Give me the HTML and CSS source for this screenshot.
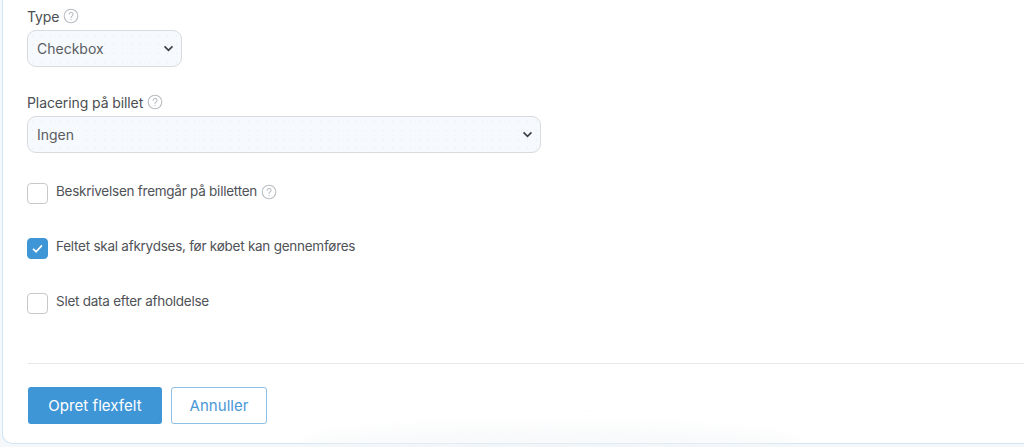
FILE: index.html
```html
<!DOCTYPE html>
<html lang="da">
<head>
<meta charset="utf-8">
<title>Opret flexfelt</title>
<link rel="stylesheet" href="styles.css">
</head>
<body>
<form class="card">
  <div class="field field-type">
    <div class="label">Type
      <svg class="help" viewBox="0 0 16 16"><circle cx="8" cy="8" r="6.8"/><path d="M6.2 6.3a1.9 1.9 0 1 1 2.9 1.6c-.7.4-1.1.8-1.1 1.6"/><path d="M8 11.3v.4"/></svg>
    </div>
    <select class="select select-small"><option>Checkbox</option></select>
  </div>
  <div class="field field-place">
    <div class="label">Placering på billet
      <svg class="help" viewBox="0 0 16 16"><circle cx="8" cy="8" r="6.8"/><path d="M6.2 6.3a1.9 1.9 0 1 1 2.9 1.6c-.7.4-1.1.8-1.1 1.6"/><path d="M8 11.3v.4"/></svg>
    </div>
    <select class="select select-wide"><option>Ingen</option></select>
  </div>
  <div class="check-row">
    <span class="box"></span>
    <span class="check-text">Beskrivelsen fremgår på billetten</span>
    <svg class="help help-row" viewBox="0 0 16 16"><circle cx="8" cy="8" r="6.8"/><path d="M6.2 6.3a1.9 1.9 0 1 1 2.9 1.6c-.7.4-1.1.8-1.1 1.6"/><path d="M8 11.3v.4"/></svg>
  </div>
  <div class="check-row">
    <span class="box box-on"><svg viewBox="0 0 20 20"><path d="M5.3 10.4l3.2 3 6.2-6.6"/></svg></span>
    <span class="check-text">Feltet skal afkrydses, før købet kan gennemføres</span>
  </div>
  <div class="check-row">
    <span class="box"></span>
    <span class="check-text">Slet data efter afholdelse</span>
  </div>
  <div class="divider"></div>
  <div class="actions">
    <button type="button" class="btn btn-primary">Opret flexfelt</button>
    <button type="button" class="btn btn-outline">Annuller</button>
  </div>
</form>
<div class="glow"></div>
</body>
</html>
```
FILE: styles.css
```css
* { box-sizing: border-box; }
html, body { margin: 0; height: 447px; overflow: hidden; }
body {
  position: relative;
  background: #f5f8fb;
  font-family: "Inter", "Liberation Sans", sans-serif;
  color: #4a4d52;
  font-size: 13px;
}
.card {
  margin-left: 2px;
  height: 444px;
  padding: 0 0 0 24px;
  background: #fff;
  border: 1px solid #cfe4f4;
  border-top: 0;
  border-right: 0;
  border-radius: 0 0 0 10px;
}
.label {
  display: flex;
  align-items: center;
  gap: 4px;
  height: 20px;
  font-size: 14px;
  letter-spacing: -0.1px;
  color: #4b4e53;
}
.field-type { padding-top: 6px; }
.field-place { padding-top: 25px; }
.help {
  width: 16px;
  height: 16px;
  fill: none;
  stroke: #b9bdc1;
  stroke-width: 1.1;
  stroke-linecap: round;
  flex: none;
}
.help-row { margin-bottom: 4px; }
.select {
  display: block;
  margin-top: 4px;
  height: 37px;
  padding: 0 0 0 9px;
  font: inherit;
  font-size: 14px;
  color: #5a5d62;
  appearance: none;
  -webkit-appearance: none;
  border: 1px solid #d8dbdd;
  border-radius: 9px;
  background-color: #f6f9fd;
  background-image:
    url("data:image/svg+xml,%3Csvg xmlns='http://www.w3.org/2000/svg' viewBox='0 0 12 8'%3E%3Cpath d='M1.5 1.5L6 6l4.5-4.5' fill='none' stroke='%233c3f44' stroke-width='1.9'/%3E%3C/svg%3E"),
    radial-gradient(circle, #e4e9ee 0.6px, transparent 0.8px);
  background-repeat: no-repeat, repeat;
  background-size: 11px 7px, 9px 9px;
  background-position: right 7px center, 0 0;
}
.select-small { width: 155px; }
.select-wide { width: 514px; }
.check-row {
  display: flex;
  align-items: center;
  height: 21px;
  margin-top: 34px;
  font-size: 13.5px;
  letter-spacing: -0.25px;
  color: #4f5257;
}
.field-place + .check-row { margin-top: 30px; }
.box {
  flex: none;
  width: 21px;
  height: 21px;
  margin-right: 8px;
  border: 1px solid #c6c8ca;
  border-radius: 4px;
  background: #fff;
}
.box-on {
  background: #3f96d6;
  border-color: #3f96d6;
}
.box-on svg {
  display: block;
  width: 19px;
  height: 19px;
  fill: none;
  stroke: #fff;
  stroke-width: 1.8;
}
.check-text {
  margin: 0 4px 4px 0;
  line-height: 15px;
}
.divider {
  height: 1px;
  margin: 49px 0 0 1px;
  background: #e6e8ea;
}
.actions {
  display: flex;
  gap: 9px;
  margin: 23px 0 0 1px;
}
.btn {
  height: 37px;
  font: inherit;
  font-size: 15px;
  letter-spacing: 0.05px;
  border-radius: 3px;
  padding: 0;
}
.btn-primary {
  width: 134px;
  color: #fff;
  background: #3f96d6;
  border: 0;
}
.btn-outline {
  width: 96px;
  color: #4a97d6;
  background: #fff;
  border: 1px solid #8ec0e6;
}
.glow {
  position: absolute;
  left: 300px;
  top: 426px;
  width: 500px;
  height: 40px;
  border-radius: 50%;
  background: #f2f4f6;
  filter: blur(8px);
  opacity: 0.5;
  pointer-events: none;
}
```
